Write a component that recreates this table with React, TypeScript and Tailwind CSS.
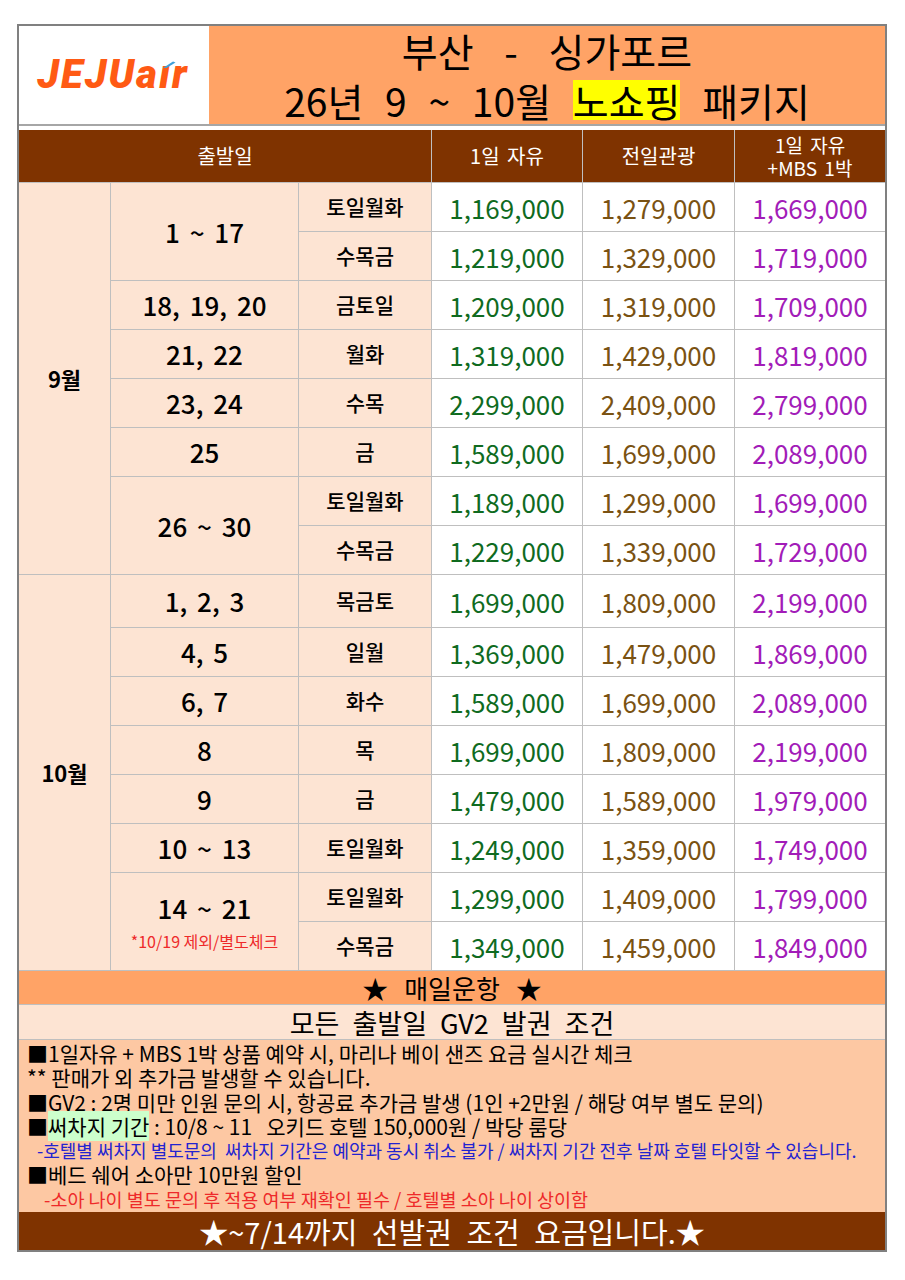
import React from 'react';

type Sub = { day: string; p: [string, string, string] };
type Row = { dates: string; note?: string; subs: Sub[] };

const september: Row[] = [
  {
    dates: '1 ~ 17',
    subs: [
      { day: '토일월화', p: ['1,169,000', '1,279,000', '1,669,000'] },
      { day: '수목금', p: ['1,219,000', '1,329,000', '1,719,000'] },
    ],
  },
  { dates: '18, 19, 20', subs: [{ day: '금토일', p: ['1,209,000', '1,319,000', '1,709,000'] }] },
  { dates: '21, 22', subs: [{ day: '월화', p: ['1,319,000', '1,429,000', '1,819,000'] }] },
  { dates: '23, 24', subs: [{ day: '수목', p: ['2,299,000', '2,409,000', '2,799,000'] }] },
  { dates: '25', subs: [{ day: '금', p: ['1,589,000', '1,699,000', '2,089,000'] }] },
  {
    dates: '26 ~ 30',
    subs: [
      { day: '토일월화', p: ['1,189,000', '1,299,000', '1,699,000'] },
      { day: '수목금', p: ['1,229,000', '1,339,000', '1,729,000'] },
    ],
  },
];

const october: Row[] = [
  { dates: '1, 2, 3', subs: [{ day: '목금토', p: ['1,699,000', '1,809,000', '2,199,000'] }] },
  { dates: '4, 5', subs: [{ day: '일월', p: ['1,369,000', '1,479,000', '1,869,000'] }] },
  { dates: '6, 7', subs: [{ day: '화수', p: ['1,589,000', '1,699,000', '2,089,000'] }] },
  { dates: '8', subs: [{ day: '목', p: ['1,699,000', '1,809,000', '2,199,000'] }] },
  { dates: '9', subs: [{ day: '금', p: ['1,479,000', '1,589,000', '1,979,000'] }] },
  { dates: '10 ~ 13', subs: [{ day: '토일월화', p: ['1,249,000', '1,359,000', '1,749,000'] }] },
  {
    dates: '14 ~ 21',
    note: '*10/19 제외/별도체크',
    subs: [
      { day: '토일월화', p: ['1,299,000', '1,409,000', '1,799,000'] },
      { day: '수목금', p: ['1,349,000', '1,459,000', '1,849,000'] },
    ],
  },
];

const priceColors = ['text-[#0f6b1f]', 'text-[#7a5212]', 'text-[#a21cb8]'];

const cell = 'flex items-center justify-center';

function MonthBlock({ label, rows }: { label: string; rows: Row[] }) {
  return (
    <>
      <div className={`${cell} row-span-8 bg-[#fde4d3] text-[22px] font-bold text-black`}>{label}</div>
      {rows.map((row) =>
        row.subs.map((sub, i) => (
          <React.Fragment key={row.dates + sub.day}>
            {i === 0 && (
              <div
                className={`${cell} flex-col bg-[#fde4d3] ${row.subs.length === 2 ? 'row-span-2' : ''}`}
              >
                <span className="text-[26px] font-medium leading-none text-black [word-spacing:4px]">{row.dates}</span>
                {row.note && (
                  <span className="mt-[12px] text-[16px] leading-none text-[#ee2a2a]">{row.note}</span>
                )}
              </div>
            )}
            <div className={`${cell} bg-[#fde4d3] text-[21px] font-medium text-black`}>{sub.day}</div>
            {sub.p.map((price, k) => (
              <div key={k} className={`${cell} bg-white text-[26px] ${priceColors[k]}`}>
                {price}
              </div>
            ))}
          </React.Fragment>
        ))
      )}
    </>
  );
}

function Logo() {
  return (
    <div className="flex items-center font-['Roboto','Liberation_Sans',sans-serif] text-[40px] font-black italic leading-none tracking-[2px] text-[#ff5a14]">
      <span>JEJUa</span>
      <span className="relative">
        ı
        <svg className="absolute left-[3px] top-[6px]" width="14" height="7" viewBox="0 0 14 7">
          <path d="M1 7 L11 0.5 L13.5 1.5 L4.5 7 Z" fill="#3fa0d8" />
        </svg>
      </span>
      <span>r</span>
    </div>
  );
}

export default function App() {
  return (
    <div className="min-h-[1280px] bg-white pt-[24px] font-['Noto_Sans_CJK_KR','Noto_Sans',sans-serif]">
      <div className="ml-[17px] w-[870px] border-2 border-[#808080]">
        {/* title */}
        <div className="flex h-[98px]">
          <div className="flex w-[190px] items-center justify-center bg-white pr-[2px]">
            <Logo />
          </div>
          <div className="flex flex-1 flex-col items-center justify-center bg-[#ffa366] text-[39px] leading-[50px] text-black">
            <div className="[word-spacing:22px]">부산 - 싱가포르</div>
            <div className="[word-spacing:13px]">
              26년 9 ~ 10월{' '}
              <span className="inline-block h-[40px] bg-[#ffff00] leading-[40px] [word-spacing:0px]">노쇼핑</span>{' '}
              패키지
            </div>
          </div>
        </div>
        <div className="h-[2px] bg-[#a6a6a6]" />
        <div className="h-[4px] bg-white" />

        {/* price table */}
        <div className="grid grid-cols-[91px_187px_132px_150px_151px_150px] grid-rows-[52px_repeat(8,48px)_52px_repeat(7,48px)] gap-px bg-[#bfbfbf]">
          <div className={`${cell} col-span-3 bg-[#7f3300] text-[20px] text-white`}>출발일</div>
          <div className={`${cell} bg-[#7f3300] text-[20px] text-white [word-spacing:3px]`}>1일 자유</div>
          <div className={`${cell} bg-[#7f3300] text-[20px] text-white`}>전일관광</div>
          <div className={`${cell} flex-col bg-[#7f3300] text-[19px] leading-[23px] text-white [word-spacing:3px]`}>
            <span>1일 자유</span>
            <span>+MBS 1박</span>
          </div>
          <MonthBlock label="9월" rows={september} />
          <MonthBlock label="10월" rows={october} />
        </div>

        {/* footer */}
        <div className="flex h-[34px] items-center justify-center border-t border-[#bfbfbf] bg-[#ffa366] text-[26px] leading-none text-black [word-spacing:10px]">
          ★ 매일운항 ★
        </div>
        <div className="flex h-[35px] items-center justify-center border-t border-[#bfbfbf] bg-[#fde4d3] text-[27px] leading-none text-black [word-spacing:7px]">
          모든 출발일 GV2 발권 조건
        </div>
        <div className="border-t border-[#bfbfbf] bg-[#fdc8a3] px-[8px] py-[1px] text-[21px] leading-[24.3px] text-black">
          <div className="whitespace-pre">■1일자유 + MBS 1박 상품 예약 시, 마리나 베이 샌즈 요금 실시간 체크</div>
          <div className="whitespace-pre">** 판매가 외 추가금 발생할 수 있습니다.</div>
          <div className="whitespace-pre">■GV2 : 2명 미만 인원 문의 시, 항공료 추가금 발생 (1인 +2만원 / 해당 여부 별도 문의)</div>
          <div className="whitespace-pre">
            ■<span className="bg-[#ccffcc]">써차지 기간</span> : 10/8 ~ 11   오키드 호텔 150,000원 / 박당 룸당
          </div>
          <div className="whitespace-pre pl-[10px] text-[18px] text-[#2323d0]">
            -호텔별 써차지 별도문의  써차지 기간은 예약과 동시 취소 불가 / 써차지 기간 전후 날짜 호텔 타잇할 수 있습니다.
          </div>
          <div className="whitespace-pre">■베드 쉐어 소아만 10만원 할인</div>
          <div className="whitespace-pre pl-[17px] text-[18.5px] text-[#ee2a2a]">
            -소아 나이 별도 문의 후 적용 여부 재확인 필수 / 호텔별 소아 나이 상이함
          </div>
        </div>
        <div className="flex h-[38px] items-center justify-center bg-[#7f3300] text-[29px] leading-none text-white [word-spacing:8px]">
          ★~7/14까지 선발권 조건 요금입니다.★
        </div>
      </div>
    </div>
  );
}
